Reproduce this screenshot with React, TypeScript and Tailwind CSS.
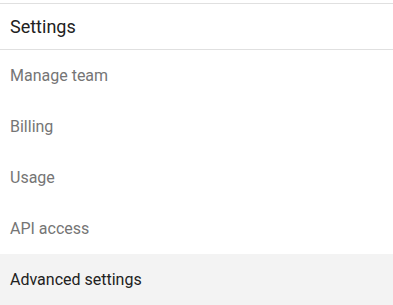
import React from "react";

const items = ["Manage team", "Billing", "Usage", "API access", "Advanced settings"];

export default function App() {
  return (
    <div className="w-[393px] h-[305px] overflow-hidden bg-white pt-[3px]" style={{ fontFamily: "Roboto, 'Liberation Sans', sans-serif" }}>
      <div className="border-t border-[#e0e0e0]">
        <div className="h-[46px] flex items-center px-[10px] text-[18px] text-[#212121] border-b border-[#e0e0e0]">
          Settings
        </div>
        <div className="flex flex-col">
          {items.map((it, i) => {
            const active = i === items.length - 1;
            return (
              <div
                key={it}
                className={
                  active
                    ? "h-[51px] flex items-center px-[10px] text-[16px] text-[#212121] bg-[#f3f3f3]"
                    : "h-[51px] flex items-center px-[10px] text-[16px] text-[#757575]"
                }
              >
                {it}
              </div>
            );
          })}
        </div>
      </div>
    </div>
  );
}
